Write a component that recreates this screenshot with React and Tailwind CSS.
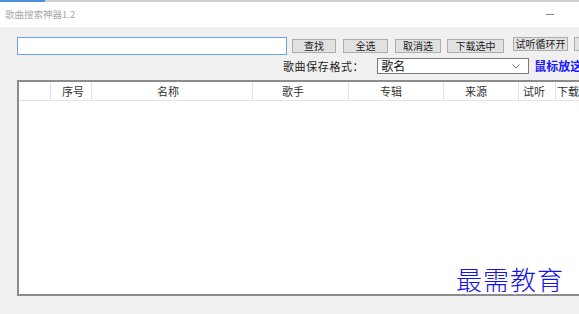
export default function App() {
  const cjk = { fontFamily: '"Noto Sans CJK SC", "Microsoft YaHei", sans-serif' };
  const cols = [
    { w: 'w-[32px]', pl: 'pl-0', t: '' },
    { w: 'w-[41px]', pl: 'pl-[11px]', t: '序号' },
    { w: 'w-[161px]', pl: 'pl-[65px]', t: '名称' },
    { w: 'w-[96px]', pl: 'pl-[29px]', t: '歌手' },
    { w: 'w-[95px]', pl: 'pl-[31px]', t: '专辑' },
    { w: 'w-[75px]', pl: 'pl-[21px]', t: '来源' },
    { w: 'w-[37px]', pl: 'pl-[4px]', t: '试听' },
    { w: 'w-[60px]', pl: 'pl-[1px]', t: '下载' },
  ];
  const btn =
    'h-[14px] shrink-0 flex items-center justify-center bg-[#e1e1e1] border border-[#adadad] text-[10px] leading-none text-[#222]';
  return (
    <div className="w-[579px] h-[314px] bg-[#f0f0f0] overflow-hidden flex flex-col relative" style={cjk}>
      {/* title bar */}
      <div className="h-[27px] shrink-0 bg-white flex flex-col">
        <div className="h-[2px] flex">
          <div className="w-[45px] bg-[#4a90d9]" />
          <div className="flex-1 bg-[#cdcdcd]" />
        </div>
        <div className="flex-1 flex items-center justify-between pl-[5px] pr-[25px]">
          <span className="text-[9.5px] text-[#a8a8a8] leading-none">歌曲搜索神器1.2</span>
          <div className="w-[8px] h-px bg-[#8a8a8a]" />
        </div>
      </div>

      {/* row 1 */}
      <div className="mt-[10px] ml-[17px] flex items-center h-[18px] whitespace-nowrap">
        <div className="w-[270px] h-[18px] bg-white border border-[#6ea5dc] shrink-0" />
        <div className={btn + ' ml-[5px] w-[44px]'}>查找</div>
        <div className={btn + ' ml-[7px] w-[45px]'}>全选</div>
        <div className={btn + ' ml-[7px] w-[46px]'}>取消选</div>
        <div className={btn + ' ml-[6px] w-[57px]'}>下载选中</div>
        <div className={btn + ' ml-[9px] w-[55px] -mt-[4px]'}>试听循环开</div>
        <div className={btn + ' ml-[6px] w-[40px] -mt-[4px]'}></div>
      </div>

      {/* row 2 */}
      <div className="mt-[3px] ml-[283px] flex items-center h-[16px] whitespace-nowrap">
        <span className="text-[11px] tracking-[0.6px] text-[#222] leading-none">歌曲保存格式：</span>
        <div className="ml-[13px] w-[152px] h-[16px] bg-white border border-[#7a7a7a] flex items-center justify-between pl-[3px] pr-[8px] shrink-0">
          <span className="text-[12px] leading-none text-[#111]">歌名</span>
          <svg width="8" height="5" viewBox="0 0 8 5">
            <path d="M0.5 0.5 L4 4 L7.5 0.5" fill="none" stroke="#777" strokeWidth="1" />
          </svg>
        </div>
        <span className="ml-[5px] text-[12px] font-bold text-[#1a1aff] leading-none">鼠标放这里试听</span>
      </div>

      {/* table */}
      <div className="mt-[6px] ml-[17px] w-[600px] h-[216px] bg-white border-2 border-[#8c8c8c] flex flex-col">
        <div className="h-[19px] flex border-b border-[#e3e3e3]">
          {cols.map((c, i) => (
            <div
              key={i}
              className={c.w + ' ' + c.pl + ' shrink-0 h-full flex items-center border-r border-[#e3e3e3] text-[11px] text-[#333] leading-none'}
            >
              {c.t}
            </div>
          ))}
        </div>
      </div>

      {/* watermark */}
      <div
        className="absolute left-[456px] top-[266px] text-[26px] leading-none text-[#1414e6] tracking-[1px]"
        style={{
          fontFamily: '"Noto Sans CJK SC", serif',
          fontWeight: 300,
          textShadow: '1px 1px 0 #fff, -1px -1px 0 #fff, 1px -1px 0 #fff, -1px 1px 0 #fff, 0 2px 0 #fff',
        }}
      >
        最需教育
      </div>
    </div>
  );
}
